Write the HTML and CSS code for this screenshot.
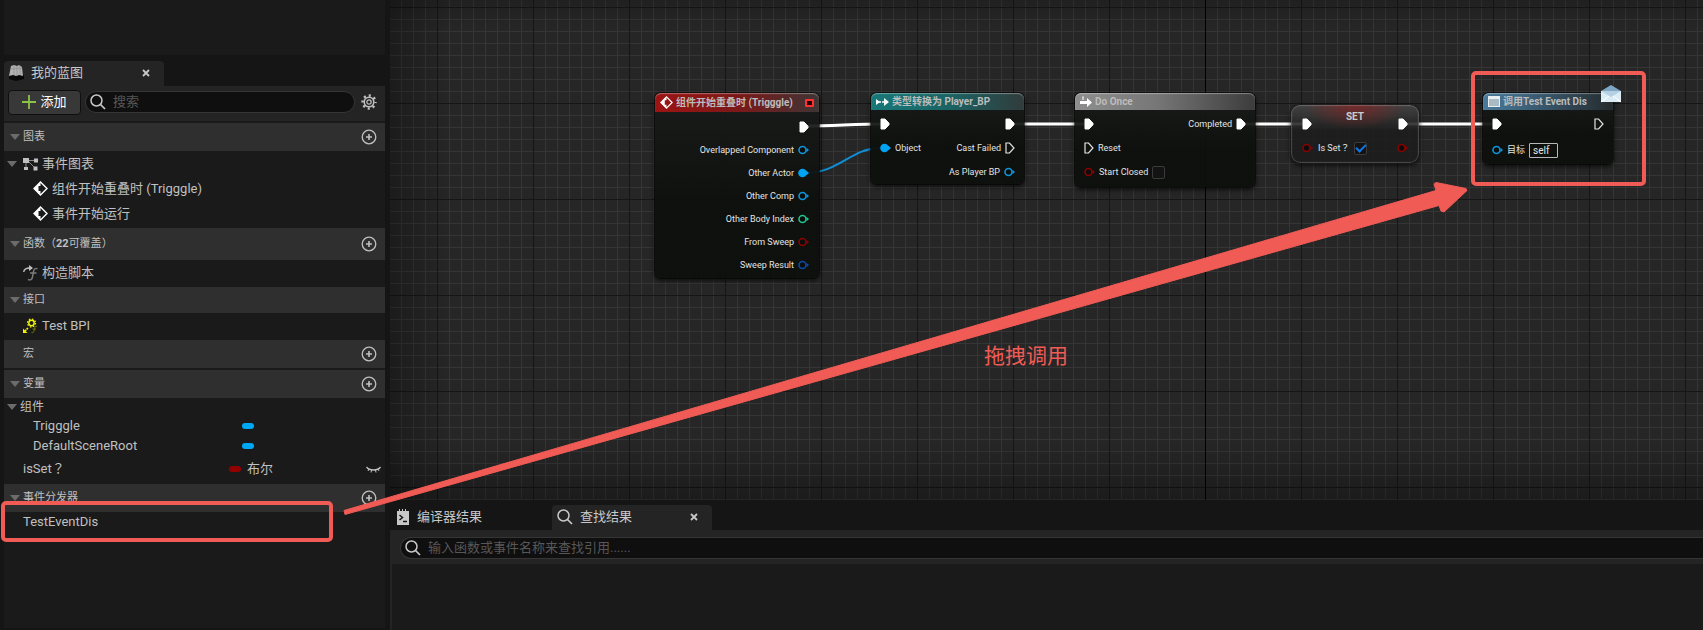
FILE: index.html
```html
<!DOCTYPE html>
<html lang="zh-CN">
<head>
  <meta charset="utf-8">
  <title>蓝图编辑器</title>
  <link rel="stylesheet" href="styles.css">
</head>
<body>
  <!-- shared icons -->
  <svg class="defs" aria-hidden="true">
    <symbol id="arrow-down" viewBox="0 0 10 6"><path d="M0 0h10L5 6z" fill="#6b6b6b"/></symbol>
    <symbol id="plus-circle" viewBox="0 0 16 16"><circle cx="8" cy="8" r="6.8" fill="none" stroke="#c0c0c0" stroke-width="1.3"/><path d="M8 5v6M5 8h6" stroke="#c0c0c0" stroke-width="1.6"/></symbol>
    <symbol id="search" viewBox="0 0 16 16"><circle cx="6.5" cy="6.5" r="5.5" fill="none" stroke="#c8c8c8" stroke-width="1.5"/><path d="M10.5 10.5l4.5 4.5" stroke="#c8c8c8" stroke-width="1.7"/></symbol>
    <symbol id="close" viewBox="0 0 8 8"><path d="M1 1l6 6M7 1L1 7" stroke="#c8c8c8" stroke-width="1.8"/></symbol>
    <symbol id="event" viewBox="0 0 15 15"><path d="M7.500 1L14 7.500 7.500 14 1 7.500z" fill="none" stroke="#fff" stroke-width="1.4"/><path d="M7.500 1v4H5.500v5h2v4L1 7.500z" fill="#fff"/></symbol>
    <symbol id="exec-on" viewBox="0 0 10 12"><path d="M1 1h4l4 4.200v1.600L5 11H1z" fill="#fff" stroke="#fff"/></symbol>
    <symbol id="exec-off" viewBox="0 0 10 12"><path d="M1 1h3.500L9 6l-4.500 5H1z" fill="none" stroke="#e4e4e4" stroke-width="1.200"/></symbol>
    <symbol id="pin" viewBox="0 0 11 10"><circle cx="4.500" cy="5" r="3.500" fill="#0b0d0c" stroke="currentColor" stroke-width="1.600"/><path d="M8.500 2.800L11 5 8.500 7.200z" fill="currentColor"/></symbol>
    <symbol id="pin-on" viewBox="0 0 11 10"><circle cx="4.500" cy="5" r="4.300" fill="currentColor"/><path d="M8 2.500L11 5 8 7.500z" fill="currentColor"/></symbol>
  </svg>

  <aside class="sidebar">
    <div class="upper-panel"></div>

    <div class="tabs">
      <div class="tab active">
        <svg class="tab-icon" width="15" height="16" viewBox="0 0 15 16"><path d="M0 11l3-2 12 1v4l-8 2-7-2z" fill="#080808"/><path d="M2 1l3-1 3 1 2-1 3 2 1 9-4-1-3 1-3-1-4 1z" fill="#b0b0b0"/><path d="M5 1v9M8 1v10M11 1v9M2 4l11-1" stroke="#8c8c8c" stroke-width=".7" fill="none"/></svg>
        <span>我的蓝图</span>
        <button class="close" aria-label="关闭"><svg width="8" height="8"><use href="#close"/></svg></button>
      </div>
    </div>

    <div class="toolbar">
      <button class="add"><svg width="14" height="14" viewBox="0 0 14 14"><path d="M7 0v14M0 7h14" stroke="#8bc24a" stroke-width="1.8"/></svg>添加</button>
      <label class="search">
        <svg width="16" height="16"><use href="#search"/></svg>
        <input type="text" placeholder="搜索" aria-label="搜索">
      </label>
      <button class="gear" aria-label="设置">
        <svg width="16" height="16" viewBox="0 0 16 16" fill="none" stroke="#c0c0c0"><circle cx="8" cy="8" r="4.800" stroke-width="1.600"/><circle cx="8" cy="8" r="2.200" stroke-width="1.200"/><circle cx="8" cy="8" r="6.500" stroke-width="2.400" stroke-dasharray="2.100 3.005" stroke-dashoffset="1.050"/></svg>
      </button>
    </div>

    <div class="tree">
      <div class="category gap-top">
        <svg class="arrow" width="10" height="6"><use href="#arrow-down"/></svg><span>图表</span>
        <button class="plus" aria-label="添加图表"><svg width="16" height="16"><use href="#plus-circle"/></svg></button>
      </div>
      <ul class="rows graphs">
        <li class="row root">
          <svg class="arrow" width="10" height="6"><use href="#arrow-down"/></svg>
          <svg class="row-icon" width="15" height="14" viewBox="0 0 15 14" fill="#c0c0c0"><path d="M0 1h6v5H0zM11 1.500h4v4h-4zM1 10h4v3H1zM10.500 9.500h4v4h-4z"/><path d="M6 3.500h5M3 6v4M6 5l5 5" stroke="#8c8c8c"/></svg>
          <span>事件图表</span>
        </li>
        <li class="row child"><svg width="15" height="15"><use href="#event"/></svg><span>组件开始重叠时 (Trigggle)</span></li>
        <li class="row child"><svg width="15" height="15"><use href="#event"/></svg><span>事件开始运行</span></li>
      </ul>

      <div class="category tall">
        <svg class="arrow" width="10" height="6"><use href="#arrow-down"/></svg><span>函数<span class="wide" lang="zh-TW">（</span><b>22</b>可覆盖<span class="wide" lang="zh-TW">）</span></span>
        <button class="plus" aria-label="添加函数"><svg width="16" height="16"><use href="#plus-circle"/></svg></button>
      </div>
      <ul class="rows single">
        <li class="row item">
          <svg class="row-icon" width="15" height="16" viewBox="0 0 15 16" fill="none"><path d="M.7 7C1 4 3 3 7 3" stroke="#c0c0c0" stroke-width="1.300"/><path d="M6 0l4 3-4 3z" fill="#c0c0c0"/><path d="M14.500 4c-2-1.500-3.500 0-4 2.500L9.500 12c-.5 2.500-2 3.500-4.500 2.500M7 8h6.500" stroke="#7c7c7c" stroke-width="1.400"/></svg>
          <span>构造脚本</span>
        </li>
      </ul>

      <div class="category short">
        <svg class="arrow" width="10" height="6"><use href="#arrow-down"/></svg><span>接口</span>
      </div>
      <ul class="rows single">
        <li class="row item">
          <svg class="row-icon" width="15" height="16" viewBox="0 0 15 16" fill="none"><circle cx="8.500" cy="5" r="2.700" stroke="#f2f200" stroke-width="1.500"/><circle cx="8.500" cy="5" r="4" stroke="#f2f200" stroke-width="1.300" stroke-dasharray="1.500 1.640"/><path d="M5 10l-3 3" stroke="#f2f200" stroke-width="1.600" stroke-dasharray="2 .6"/><path d="M0 10.500V15h4.500z" fill="#f2f200"/><path d="M14 8.500c-1.500-.8-2 .2-2.400 2L11 13c-.4 1.500-1 2-2.500 1.500M9.500 11H13" stroke="#77770f"/></svg>
          <span>Test BPI</span>
        </li>
      </ul>

      <div class="category">
        <span class="arrow empty"></span><span>宏</span>
        <button class="plus" aria-label="添加宏"><svg width="16" height="16"><use href="#plus-circle"/></svg></button>
      </div>
      <div class="category gap-top">
        <svg class="arrow" width="10" height="6"><use href="#arrow-down"/></svg><span>变量</span>
        <button class="plus" aria-label="添加变量"><svg width="16" height="16"><use href="#plus-circle"/></svg></button>
      </div>
      <ul class="rows variables">
        <li class="row group"><svg class="arrow" width="10" height="6"><use href="#arrow-down"/></svg><span>组件</span></li>
        <li class="row child"><span class="name">Trigggle</span><i class="pill blue"></i></li>
        <li class="row child"><span class="name">DefaultSceneRoot</span><i class="pill blue"></i></li>
        <li class="row item var">
          <span class="name wide" lang="zh-TW">isSet？</span>
          <button class="type"><i class="pill red"></i>布尔</button>
          <button class="eye" aria-label="可视性"><svg width="15" height="7" viewBox="0 0 15 7" fill="none" stroke="#c0c0c0"><path d="M.5 1c3 4 11 4 14 0" stroke-width="1.300"/><path d="M3 3L2 5M5.500 4L5 6.500M9.500 4l.5 2.500M12 3l1 2"/></svg></button>
        </li>
      </ul>

      <div class="category">
        <svg class="arrow" width="10" height="6"><use href="#arrow-down"/></svg><span>事件分发器</span>
        <button class="plus" aria-label="添加事件分发器"><svg width="16" height="16"><use href="#plus-circle"/></svg></button>
      </div>
      <ul class="rows dispatchers">
        <li class="row item"><span>TestEventDis</span></li>
      </ul>
    </div>
  </aside>

  <main class="main">
    <section class="graph">
      <svg class="wires" width="1313" height="300" fill="none">
        <g stroke="#fff" stroke-width="3">
          <path d="M418 126C440 126 468 124 492 124"/>
          <path d="M622 124h74M854 124h60M1016 124h88"/>
        </g>
        <path d="M416 173C448 173 462 148 490 148" stroke="#0f8fd6" stroke-width="2"/>
      </svg>

      <article class="node overlap">
        <header class="red">
          <svg width="13" height="13"><use href="#event"/></svg>
          <span>组件开始重叠时 (Trigggle)</span>
          <i class="delegate"></i>
        </header>
        <div class="pins">
          <div class="outputs">
            <div class="pin"><svg width="10" height="12"><use href="#exec-on"/></svg></div>
            <div class="pin">Overlapped Component<svg class="object" width="11" height="10"><use href="#pin"/></svg></div>
            <div class="pin">Other Actor<svg class="object linked" width="11" height="10"><use href="#pin-on"/></svg></div>
            <div class="pin">Other Comp<svg class="object" width="11" height="10"><use href="#pin"/></svg></div>
            <div class="pin">Other Body Index<svg class="int" width="11" height="10"><use href="#pin"/></svg></div>
            <div class="pin">From Sweep<svg class="bool" width="11" height="10"><use href="#pin"/></svg></div>
            <div class="pin">Sweep Result<svg class="struct" width="11" height="10"><use href="#pin"/></svg></div>
          </div>
        </div>
      </article>

      <article class="node cast">
        <header class="teal">
          <svg width="13" height="8" viewBox="0 0 13 8" fill="#fff"><path d="M0 1l4 3-4 3zM8 0l5 4-5 4z"/><path d="M2 4h3M6 4h3" stroke="#fff" stroke-width="1.500"/></svg>
          <span>类型转换为 Player_BP</span>
        </header>
        <div class="pins">
          <div class="inputs">
            <div class="pin"><svg width="10" height="12"><use href="#exec-on"/></svg></div>
            <div class="pin"><svg class="object linked" width="11" height="10"><use href="#pin-on"/></svg>Object</div>
          </div>
          <div class="outputs">
            <div class="pin"><svg width="10" height="12"><use href="#exec-on"/></svg></div>
            <div class="pin">Cast Failed<svg width="10" height="12"><use href="#exec-off"/></svg></div>
            <div class="pin">As Player BP<svg class="object" width="11" height="10"><use href="#pin"/></svg></div>
          </div>
        </div>
      </article>

      <article class="node do-once">
        <header class="grey">
          <svg width="12" height="11" viewBox="0 0 12 11" fill="#fff"><path d="M0 5h7V2l5 4.500L7 11V8H0z"/><path d="M2 1l1.500-1v4H2.500V1.500z"/></svg>
          <span>Do Once</span>
        </header>
        <div class="pins">
          <div class="inputs">
            <div class="pin"><svg width="10" height="12"><use href="#exec-on"/></svg></div>
            <div class="pin"><svg width="10" height="12"><use href="#exec-off"/></svg>Reset</div>
            <label class="pin"><svg class="bool" width="11" height="10"><use href="#pin"/></svg>Start Closed<input type="checkbox"></label>
          </div>
          <div class="outputs">
            <div class="pin">Completed<svg width="10" height="12"><use href="#exec-on"/></svg></div>
          </div>
        </div>
      </article>

      <article class="node set">
        <h2>SET</h2>
        <div class="pins">
          <div class="inputs">
            <div class="pin"><svg width="10" height="12"><use href="#exec-on"/></svg></div>
            <label class="pin"><svg class="bool" width="11" height="10"><use href="#pin"/></svg><span class="wide" lang="zh-TW">Is Set？</span><input type="checkbox" checked></label>
          </div>
          <div class="outputs">
            <div class="pin"><svg width="10" height="12"><use href="#exec-on"/></svg></div>
            <div class="pin"><svg class="bool" width="11" height="10"><use href="#pin"/></svg></div>
          </div>
        </div>
      </article>

      <article class="node call">
        <header class="blue">
          <svg width="12" height="11" viewBox="0 0 12 11"><path d="M0 0h12v11H0z" fill="#e9eef0"/><path d="M1 3h10v7H1z" fill="#a9bac4"/></svg>
          <span>调用Test Event Dis</span>
        </header>
        <svg class="envelope" width="20" height="18" viewBox="0 0 20 18"><path d="M0 6l10-6 10 6z" fill="#7fa6c2"/><path d="M0 6h20v11H0z" fill="#dcecf5"/><path d="M0 6l10 6 10-6z" fill="#b4d0e2"/><path d="M0 17l8-6M20 17l-8-6" stroke="#fff" fill="none"/></svg>
        <div class="pins">
          <div class="inputs">
            <div class="pin"><svg width="10" height="12"><use href="#exec-on"/></svg></div>
            <label class="pin target"><svg class="object" width="11" height="10"><use href="#pin"/></svg>目标<input type="text" value="self"></label>
          </div>
          <div class="outputs">
            <div class="pin"><svg width="10" height="12"><use href="#exec-off"/></svg></div>
          </div>
        </div>
      </article>

      <p class="note">拖拽调用</p>
    </section>

    <section class="results">
      <div class="tabs">
        <div class="tab">
          <svg class="tab-icon" width="12" height="16" viewBox="0 0 12 16"><path d="M0 2h2V0h1v2h2V0h1v2h2V0h1v2h3v14H0z" fill="#c8c8c8"/><path d="M2.500 6l3 2.500-3 2.500M6 12.500h4" stroke="#151515" stroke-width="1.500" fill="none"/></svg>
          <span>编译器结果</span>
        </div>
        <div class="tab active">
          <svg class="tab-icon" width="16" height="16"><use href="#search"/></svg>
          <span>查找结果</span>
          <button class="close" aria-label="关闭"><svg width="8" height="8"><use href="#close"/></svg></button>
        </div>
      </div>
      <div class="find-bar">
        <label class="search">
          <svg width="16" height="16"><use href="#search"/></svg>
          <input type="text" placeholder="输入函数或事件名称来查找引用......" aria-label="查找">
        </label>
      </div>
      <div class="find-list"></div>
    </section>
  </main>

  <!-- annotations -->
  <div class="mark mark-dispatcher"></div>
  <div class="mark mark-call"></div>
  <svg class="mark-arrow" width="1130" height="340" viewBox="340 180 1130 340">
    <path d="M344 510.500L1436 190.500 1434 184 1436 182.500 1466 188.500 1467 190.500 1444 212 1441 211 1439 205.500 345 514.500z" fill="#f15b55" stroke="#f15b55" stroke-linejoin="round"/>
  </svg>
</body>
</html>
```

FILE: styles.css
```css
* {
  box-sizing: border-box;
}

body {
  position: relative;
  display: flex;
  height: 100vh;
  margin: 0;
  overflow: hidden;
  background: #151515;
  color: #c0c0c0;
  font-family: Roboto, "Noto Sans CJK SC", sans-serif;
  font-size: 13px;
  line-height: 18px;
}

button,
input {
  margin: 0;
  padding: 0;
  border: none;
  background: none;
  color: inherit;
  font: inherit;
}

button {
  display: flex;
  align-items: center;
  cursor: pointer;
}

svg {
  flex-shrink: 0;
}

ul {
  margin: 0;
  padding: 0;
  list-style: none;
}

.defs {
  position: absolute;
  width: 0;
  height: 0;
}

/* centred full-width punctuation */
.wide {
  font-family: Roboto, "Noto Sans CJK TC", sans-serif;
}

/* sidebar */
.sidebar {
  display: flex;
  flex-direction: column;
  flex-shrink: 0;
  width: 390px;
  padding: 0 5px 2px 4px;
}

.upper-panel {
  height: 55px;
  margin-bottom: 6px;
  background: #1a1a1a;
  border-radius: 0 0 3px 3px;
}

.tabs {
  display: flex;
  height: 25px;
}

.tab {
  display: flex;
  align-items: center;
  width: 160px;
  padding: 0 14px 2px 5px;
  color: #c8c8c8;
}

.tab.active {
  background: #242424;
  border-radius: 4px 4px 0 0;
}

.tab-icon {
  margin-right: 7px;
}

.close {
  margin-left: auto;
}

.toolbar {
  display: flex;
  align-items: center;
  height: 35px;
  padding: 0 8px 3px 4px;
  background: #242424;
}

.add {
  justify-content: center;
  gap: 4px;
  width: 73px;
  height: 25px;
  margin-right: 4px;
  background: #383838;
  border: 1px solid #0f0f0f;
  border-radius: 4px;
  color: #fff;
}

.search {
  display: flex;
  flex: 1;
  align-items: center;
  height: 22px;
  padding: 0 4px;
  background: #0f0f0f;
  border: 1px solid #353535;
  border-radius: 11px;
}

.search input {
  flex: 1;
  min-width: 0;
  margin-left: 7px;
  outline: none;
}

.search input::placeholder {
  color: #575757;
}

.gear {
  margin-left: 6px;
}

.tree {
  flex: 1;
  background: #1a1a1a;
}

.category {
  display: flex;
  align-items: center;
  height: 28px;
  padding: 0 8px 0 6px;
  background: #2f2f2f;
  font-size: 11px;
}

.category.tall {
  height: 32px;
}

.category.short {
  height: 26px;
}

.category.gap-top {
  margin-top: 2px;
}

.arrow {
  width: 10px;
  margin-right: 3px;
}

.plus {
  margin-left: auto;
}

.row {
  display: flex;
  align-items: center;
  height: 25px;
}

.row.root,
.row.group {
  padding-left: 3px;
}

.row.root .arrow {
  margin-right: 6px;
}

.row-icon {
  margin-right: 4px;
}

.row.child {
  padding-left: 29px;
}

.row.item {
  padding-left: 19px;
}

.graphs {
  padding-bottom: 2px;
}

.graphs .child {
  gap: 4px;
}

.single .row {
  height: 27px;
  padding-bottom: 2px;
}

.variables {
  padding-bottom: 2px;
}

.variables .row {
  height: 20px;
}

.variables .group {
  height: 18px;
  font-size: 12px;
}

.variables .var {
  height: 26px;
  padding-right: 4px;
}

.child .name {
  width: 209px;
}

.var .name {
  width: 206px;
}

.pill {
  width: 12px;
  height: 6px;
  border-radius: 3px;
}

.pill.blue {
  background: #00a8f3;
}

.pill.red {
  background: #930000;
}

.type {
  gap: 6px;
}

.eye {
  margin-left: auto;
}

.dispatchers .row {
  height: 20px;
}

/* graph */
.main {
  display: flex;
  flex: 1;
  flex-direction: column;
  min-width: 0;
}

.graph {
  position: relative;
  flex: 1;
  overflow: hidden;
  background-color: #262626;
  background-image:
    linear-gradient(#161616 1px, transparent 1px),
    linear-gradient(90deg, #161616 1px, transparent 1px),
    linear-gradient(#353535 1px, transparent 1px),
    linear-gradient(90deg, #353535 1px, transparent 1px);
  background-position: 47px 7px;
  background-size: 96px 96px, 96px 96px, 12px 12px, 12px 12px;
}

/* world origin axis */
.graph::before {
  content: "";
  position: absolute;
  top: 0;
  bottom: 0;
  left: 815px;
  width: 1px;
  background: #000;
}

/* darker edges */
.graph::after {
  content: "";
  position: absolute;
  inset: 0;
  background:
    linear-gradient(90deg, rgba(0, 0, 0, 0.28), transparent 60px),
    linear-gradient(rgba(0, 0, 0, 0.15), transparent 30px),
    linear-gradient(0deg, rgba(0, 0, 0, 0.28), transparent 60px);
  pointer-events: none;
}

.wires {
  position: absolute;
  top: 0;
  left: 0;
}

.node {
  position: absolute;
  top: 93px;
  background: linear-gradient(rgba(24, 27, 25, 0.92), rgba(12, 15, 12, 0.94) 60%);
  border-radius: 6px;
  box-shadow: 0 0 0 1px rgba(0, 0, 0, 0.5), 0 2px 4px 1px rgba(0, 0, 0, 0.6);
  color: #e4e4e4;
  font-size: 9px;
  line-height: 12px;
}

.node header {
  display: flex;
  align-items: center;
  gap: 3px;
  height: 17px;
  padding: 0 5px;
  border-radius: 6px 6px 0 0;
  box-shadow: inset 0 1px 1px rgba(255, 255, 255, 0.35);
  color: #bcbcbc;
  font-size: 10px;
  font-weight: 700;
  white-space: nowrap;
}

header.red {
  background: linear-gradient(90deg, #9c1414, #7c1818 50%, #3e3535);
}

header.teal {
  background: linear-gradient(90deg, #187878, #1b6465 50%, #313b3b);
}

header.grey {
  background: linear-gradient(90deg, #8e8e8e, #777 45%, #3c3c3c);
}

header.blue {
  background: linear-gradient(90deg, #4a7b9c, #375468 50%, #252a2d);
}

.delegate {
  width: 9px;
  height: 8px;
  margin-left: auto;
  border: 2px solid #ff3030;
  border-radius: 1px;
  background: #200;
}

.pins {
  display: flex;
  justify-content: space-between;
  padding: 2px 9px 0;
}

.pin {
  display: flex;
  align-items: center;
  gap: 4px;
  height: 24px;
}

.outputs .pin {
  justify-content: flex-end;
}

.object {
  color: #0b96dc;
}

.object.linked {
  color: #00a4f2;
}

.int {
  color: #1fc28c;
}

.bool {
  color: #8c0000;
}

.struct {
  color: #0a4aa8;
}

.pin input[type="checkbox"] {
  appearance: none;
  display: grid;
  place-items: center;
  width: 13px;
  height: 13px;
  background: #131313;
  border: 1px solid #3b3b3b;
  border-radius: 2px;
}

.pin input[type="checkbox"]:checked::after {
  content: "";
  width: 8px;
  height: 4px;
  margin-bottom: 2px;
  border: solid #0f78e6;
  border-width: 0 0 2px 2px;
  transform: rotate(-45deg);
}

.overlap {
  left: 265px;
  width: 164px;
  padding-bottom: 2px;
}

.overlap header {
  height: 19px;
}

.overlap .pins {
  justify-content: flex-end;
  padding: 3px 10px 0;
}

.overlap .pin {
  height: 23px;
}

.cast {
  left: 481px;
  width: 153px;
}

.do-once {
  left: 685px;
  width: 180px;
  padding-bottom: 3px;
}

.set {
  top: 105px;
  left: 901px;
  width: 128px;
  padding-bottom: 3px;
  border-radius: 9px;
  background:
    radial-gradient(50px 24px at 50% 0, rgba(130, 35, 35, 0.8), transparent),
    linear-gradient(rgba(70, 70, 70, 0.9), rgba(28, 29, 28, 0.9) 45%);
  box-shadow: inset 0 0 1px 1px rgba(255, 255, 255, 0.2), 0 2px 4px 1px rgba(0, 0, 0, 0.6);
}

.set h2 {
  position: absolute;
  top: 6px;
  left: 0;
  width: 100%;
  margin: 0;
  color: #ccc;
  font-size: 10px;
  font-weight: 700;
  text-align: center;
}

.set .pins {
  padding: 7px 11px 0;
}

.set .inputs .pin {
  gap: 5px;
}

.call {
  left: 1093px;
  width: 130px;
}

.pin.target {
  height: 28px;
}

.pin input[type="text"] {
  width: 29px;
  height: 15px;
  padding: 0 3px;
  border: 1px solid #b8b8b8;
  border-radius: 1px;
  font-size: 10px;
}

.envelope {
  position: absolute;
  top: -8px;
  right: -8px;
}

.note {
  position: absolute;
  top: 344px;
  left: 594px;
  margin: 0;
  color: #f15b55;
  font-size: 21px;
  line-height: 24px;
}

/* results */
.results {
  display: flex;
  flex-direction: column;
  height: 130px;
  padding-top: 5px;
}

.results .tab:first-child {
  gap: 1px;
  width: 162px;
  padding-left: 7px;
}

.find-bar {
  display: flex;
  height: 34px;
  padding: 7px 0 5px 10px;
  background: #242424;
}

.find-bar .search {
  border-right: none;
  border-radius: 11px 0 0 11px;
}

.find-list {
  flex: 1;
  border-left: 2px solid #242424;
  background: #1a1a1a;
}

/* annotations */
.mark {
  position: absolute;
  border: 4px solid #f15b55;
  border-radius: 5px;
  pointer-events: none;
}

.mark-dispatcher {
  top: 501px;
  left: 1px;
  width: 332px;
  height: 41px;
}

.mark-call {
  top: 71px;
  left: 1471px;
  width: 175px;
  height: 115px;
}

.mark-arrow {
  position: absolute;
  top: 180px;
  left: 340px;
  pointer-events: none;
}
```
